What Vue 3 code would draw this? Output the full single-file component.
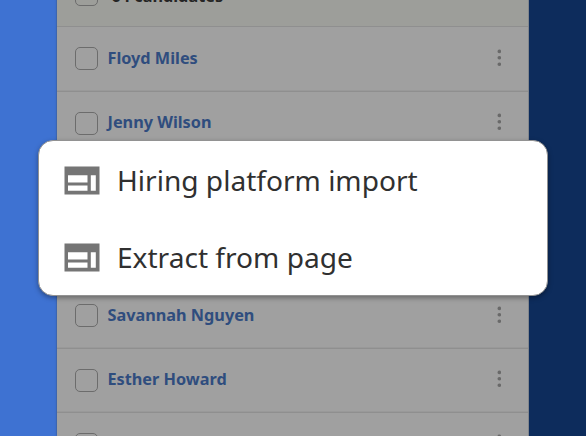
<template>
  <div class="screen">
    <div class="side side-left"></div>
    <div class="list">
      <div class="row header">
        <span class="checkbox"></span>
        <span class="count">64 candidates</span>
      </div>
      <div v-for="(name, i) in candidates" :key="i" class="row">
        <span class="checkbox"></span>
        <span class="name">{{ name }}</span>
        <svg class="more" width="4" height="18" viewBox="0 0 4 18">
          <circle cx="2.3" cy="2.4" r="1.8" />
          <circle cx="2.3" cy="8.8" r="1.8" />
          <circle cx="2.3" cy="15.2" r="1.8" />
        </svg>
      </div>
    </div>
    <div class="side side-right"></div>

    <div class="menu">
      <div v-for="item in menuItems" :key="item" class="menu-item">
        <svg class="menu-icon" width="36" height="29" viewBox="0 0 36 29">
          <path
            fill-rule="evenodd"
            d="M.5.5h35v28H.5zM4 9.3v7.1h19.5V9.3zM4 19.6v5.2h19.5v-5.2zM26.8 9.3v15.5h5V9.3z"
          />
        </svg>
        <span class="menu-label">{{ item }}</span>
      </div>
    </div>
  </div>
</template>

<script setup>
import { ref } from 'vue';

const candidates = ref([
  'Floyd Miles',
  'Jenny Wilson',
  '',
  '',
  'Savannah Nguyen',
  'Esther Howard',
  ''
]);

const menuItems = ['Hiring platform import', 'Extract from page'];
</script>

<style>
body {
  margin: 0;
  overflow: hidden;
}
</style>

<style scoped>
.screen {
  position: relative;
  display: flex;
  width: 586px;
  height: 436px;
  overflow: hidden;
  font-family: 'Noto Sans', sans-serif;
}

.side-left {
  width: 57px;
  background: #3e72d2;
}

.side-right {
  flex: 1;
  background: #0d2c5c;
}

.list {
  box-sizing: border-box;
  width: 472px;
  margin-top: -37px;
  background: #a0a0a0;
  border-right: 1px solid #82868c;
  box-shadow: 0 0 2px rgba(60, 60, 60, 0.7);
}

.row {
  box-sizing: border-box;
  display: flex;
  align-items: center;
  height: 64.25px;
  padding: 0 27px 0 18px;
  border-bottom: 1px solid #8f8f8f;
  box-shadow: inset 0 -1px 0 #999;
}

.header {
  background: #9d9e9a;
  box-shadow: none;
}

.checkbox {
  box-sizing: border-box;
  width: 23px;
  height: 23px;
  margin-right: 9.5px;
  border: 1px solid #6c6c6c;
  border-radius: 5px;
}

.name,
.count {
  margin-bottom: 2px;
  font-size: 16.25px;
  font-weight: 700;
  line-height: 22px;
  color: #2f4d7e;
}

.count {
  margin: 3px 0 0 4px;
  color: #252525;
}

.more {
  margin: 0 0 2px auto;
  fill: #696969;
}

/* Menu floating above the dimmed list */
.menu {
  position: absolute;
  left: 38px;
  top: 140px;
  box-sizing: border-box;
  width: 510px;
  height: 156px;
  background: #fff;
  border: 1.5px solid #929292;
  border-radius: 15px;
  box-shadow: 0 2px 5px rgba(0, 0, 0, 0.35);
}

.menu-item {
  display: flex;
  align-items: center;
  height: 77px;
  padding: 2px 0 0 25px;
  box-sizing: border-box;
  font-size: 28.1px;
  line-height: 40px;
  color: #303030;
}

.menu-icon {
  margin-right: 17px;
  fill: #757575;
}

.menu-label {
  margin-bottom: 2px;
}
</style>
